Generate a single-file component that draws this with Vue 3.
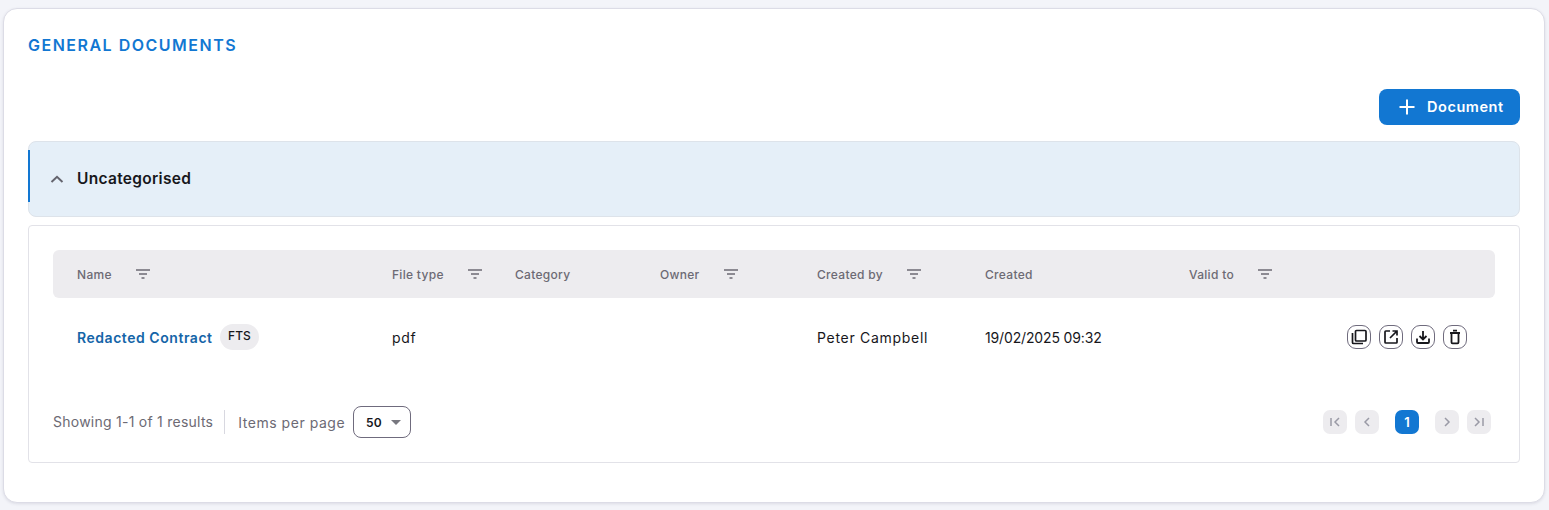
<template>
  <div class="page">
    <section class="card">
      <h2 class="title">GENERAL DOCUMENTS</h2>

      <div class="toolbar">
        <button class="add-btn">
          <svg width="18" height="18" viewBox="0 0 18 18"><path d="M9 1.500v15M1.500 9h15" stroke="#fff" stroke-width="2" fill="none" /></svg>
          <span class="add-label">Document</span>
        </button>
      </div>

      <div class="group-head">
        <span class="group-bar"></span>
        <svg class="chevron" width="14" height="14" viewBox="0 0 14 14"><path d="M1.500 10L7 4.800 12.500 10" stroke="#64646e" stroke-width="2" fill="none" /></svg>
        <span class="group-name">Uncategorised</span>
      </div>

      <div class="panel">
        <div class="cols head">
          <div v-for="col in columns" :key="col.label" class="head-cell">
            <span>{{ col.label }}</span>
            <svg v-if="col.filter" width="16" height="12" viewBox="0 0 16 12"><path d="M1 2h14M4 6h8M6.500 10h3" stroke="#6c6a74" stroke-width="1.500" fill="none" /></svg>
          </div>
          <div></div>
        </div>

        <div class="cols row">
          <div class="name-cell">
            <a class="doc-link">Redacted Contract</a>
            <span class="tag">FTS</span>
          </div>
          <div class="wide">pdf</div>
          <div></div>
          <div></div>
          <div class="wide">Peter Campbell</div>
          <div class="date">19/02/2025 09:32</div>
          <div></div>
          <div class="actions">
            <button class="icon-btn">
              <svg width="18" height="18" viewBox="0 0 18 18" fill="none" stroke="#17171c" stroke-width="1.700"><rect x="5.500" y="2.500" width="10.500" height="10.500" rx="1" /><path d="M2.500 5v9.500a1 1 0 0 0 1 1H13" /></svg>
            </button>
            <button class="icon-btn">
              <svg width="18" height="18" viewBox="0 0 18 18" fill="none" stroke="#17171c" stroke-width="1.700"><path d="M8 3H3.800a.8.8 0 0 0-.8.8v10.400a.8.8 0 0 0 .8.8h10.400a.8.8 0 0 0 .8-.8V10M10.500 3H15v4.500M15 3L8 10" /></svg>
            </button>
            <button class="icon-btn">
              <svg width="18" height="18" viewBox="0 0 18 18" fill="none" stroke="#17171c" stroke-width="1.800"><path d="M3 10.500V14a1 1 0 0 0 1 1h10a1 1 0 0 0 1-1v-3.500M9 3v8M5.500 8L9 11.500 12.500 8" /></svg>
            </button>
            <button class="icon-btn">
              <svg width="18" height="18" viewBox="0 0 18 18" fill="none" stroke="#17171c" stroke-width="1.800"><path d="M4 5h10M7 2.700h4M5.500 5v9.300a1 1 0 0 0 1 1h5a1 1 0 0 0 1-1V5" /></svg>
            </button>
          </div>
        </div>

        <div class="footer">
          <div class="results">Showing 1-1 of 1 results</div>
          <div class="per-page">
            <span>Items per page</span>
            <div class="select">
              <span>50</span>
              <i class="caret"></i>
            </div>
          </div>
          <div class="pager">
            <button class="page-btn">
              <svg width="14" height="14" viewBox="0 0 14 14" fill="none" stroke="#9a9aa6" stroke-width="1.500"><path d="M3 3v8M11 3L7 7l4 4" /></svg>
            </button>
            <button class="page-btn">
              <svg width="14" height="14" viewBox="0 0 14 14" fill="none" stroke="#9a9aa6" stroke-width="1.500"><path d="M9 3L5 7l4 4" /></svg>
            </button>
            <button class="page-btn current">1</button>
            <button class="page-btn">
              <svg width="14" height="14" viewBox="0 0 14 14" fill="none" stroke="#9a9aa6" stroke-width="1.500"><path d="M5 3l4 4-4 4" /></svg>
            </button>
            <button class="page-btn">
              <svg width="14" height="14" viewBox="0 0 14 14" fill="none" stroke="#9a9aa6" stroke-width="1.500"><path d="M11 3v8M3 3l4 4-4 4" /></svg>
            </button>
          </div>
        </div>
      </div>
    </section>
  </div>
</template>

<script setup>
const columns = [
  { label: 'Name', filter: true },
  { label: 'File type', filter: true },
  { label: 'Category', filter: false },
  { label: 'Owner', filter: true },
  { label: 'Created by', filter: true },
  { label: 'Created', filter: false },
  { label: 'Valid to', filter: true },
]
</script>

<style>
html, body {
  margin: 0;
  background: #f3f4f9;
}
</style>

<style scoped>
.page {
  height: 510px;
  padding: 8px 4px 7px 3px;
  box-sizing: border-box;
  font-family: Inter, "Open Sans", sans-serif;
  color: #17171c;
}

.card {
  height: 495px;
  box-sizing: border-box;
  background: #fff;
  border: 1px solid #dcdce6;
  border-radius: 14px;
  padding: 0 24px 0 24px;
  box-shadow: 0 1px 3px rgba(60, 60, 90, 0.12);
}

.title {
  margin: 0;
  padding-top: 27px;
  height: 54px;
  box-sizing: border-box;
  font-size: 16px;
  line-height: 18px;
  font-weight: 600;
  letter-spacing: 1.5px;
  color: #1277d2;
}

.toolbar {
  display: flex;
  justify-content: flex-end;
  margin-top: 26px;
}

.add-btn {
  width: 141px;
  height: 36px;
  display: flex;
  align-items: center;
  padding: 0 0 0 19px;
  gap: 11px;
  border: 0;
  border-radius: 8px;
  background: #1277d2;
  color: #fff;
  font: 600 14.500px Inter, sans-serif;
  letter-spacing: 0.55px;
}

.add-label {
  margin-bottom: 2px;
}

.group-head {
  position: relative;
  height: 76px;
  margin-top: 16px;
  box-sizing: border-box;
  display: flex;
  align-items: center;
  padding-left: 21px;
  gap: 13px;
  background: #e5eff8;
  border: 1px solid #dde3ea;
  border-radius: 8px;
}

.group-bar {
  position: absolute;
  left: -1px;
  top: 8px;
  width: 2px;
  height: 52px;
  background: #1277d2;
}

.group-name {
  margin-bottom: 2px;
  font-size: 15.500px;
  font-weight: 600;
  letter-spacing: 0.3px;
  color: #17171c;
}

.panel {
  height: 238px;
  margin-top: 8px;
  box-sizing: border-box;
  border: 1px solid #e2e2e8;
  border-radius: 4px;
  padding: 24px 24px 0;
}

.cols {
  display: grid;
  grid-template-columns: 315px 123px 145px 157px 168px 204px 1fr 148px;
  padding: 0 28px 0 24px;
  align-items: center;
}

.head {
  height: 48px;
  background: #edecef;
  border-radius: 6px;
  font-size: 12px;
  font-weight: 500;
  letter-spacing: 0.3px;
  color: #6c6a74;
}

.head-cell {
  display: flex;
  align-items: center;
  gap: 23.500px;
}

.row {
  height: 80px;
  box-sizing: border-box;
  padding-bottom: 2px;
  font-size: 14px;
  color: #17171c;
}

.wide {
  letter-spacing: 0.7px;
}

.date {
  letter-spacing: -0.15px;
}

.name-cell {
  display: flex;
  align-items: center;
  gap: 7px;
}

.doc-link {
  color: #1565a8;
  font-weight: 600;
  letter-spacing: 0.54px;
}

.tag {
  padding: 0 8.500px;
  height: 26px;
  line-height: 24px;
  border-radius: 13px;
  background: #edecef;
  font-size: 12px;
  font-weight: 500;
}

.actions {
  display: flex;
  justify-content: flex-end;
  gap: 8px;
}

.icon-btn {
  width: 24px;
  height: 24px;
  padding: 0;
  display: flex;
  align-items: center;
  justify-content: center;
  background: #fff;
  border: 1px solid #6f6b7d;
  border-radius: 9px;
}

.footer {
  display: flex;
  align-items: center;
  height: 32px;
  margin-top: 28px;
  font-size: 14px;
  color: #6c6a74;
}

.results {
  padding-right: 11px;
  height: 24px;
  line-height: 24px;
  letter-spacing: 0.25px;
  border-right: 1px solid #d8d8e0;
}

.per-page {
  display: flex;
  align-items: center;
  gap: 8px;
  margin-left: 13px;
  letter-spacing: 0.53px;
}

.select {
  width: 58px;
  height: 32px;
  box-sizing: border-box;
  display: flex;
  align-items: center;
  justify-content: space-between;
  padding: 0 9px 0 12px;
  border: 1px solid #6f6b7d;
  border-radius: 8px;
  color: #17171c;
  font-size: 12px;
  font-weight: 600;
  letter-spacing: 0;
}

.caret {
  width: 0;
  height: 0;
  border-left: 5px solid transparent;
  border-right: 5px solid transparent;
  border-top: 5px solid #77777f;
}

.pager {
  display: flex;
  align-items: center;
  margin-left: auto;
  margin-right: 4px;
}

.page-btn {
  width: 24px;
  height: 24px;
  padding: 0;
  display: flex;
  align-items: center;
  justify-content: center;
  margin-left: 8px;
  border: 0;
  border-radius: 7px;
  background: #edecef;
}

.page-btn.current {
  margin: 0 8px 0 16px;
  background: #1277d2;
  color: #fff;
  font: 600 13px Inter, sans-serif;
}
</style>
